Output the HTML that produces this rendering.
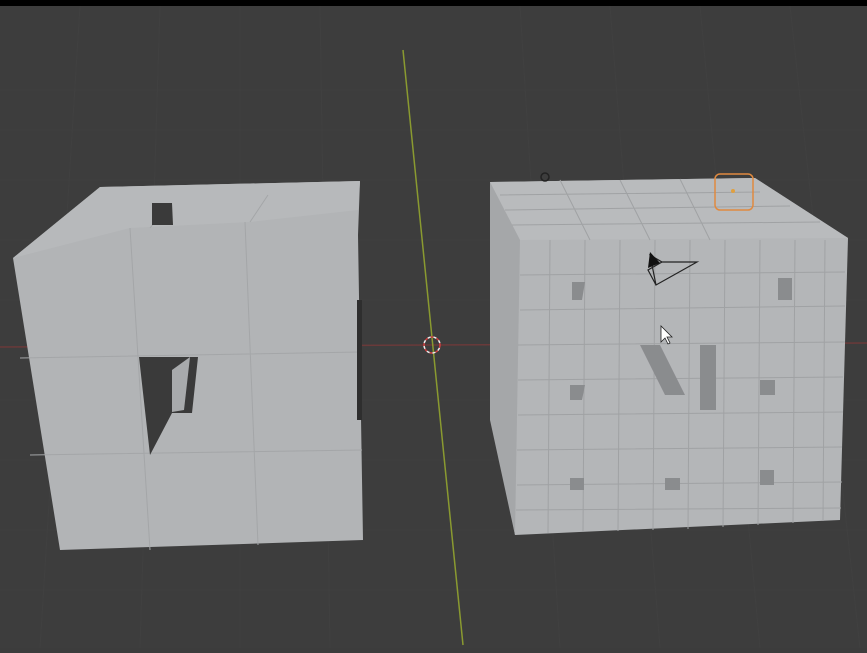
<!DOCTYPE html>
<html><head><style>html,body{margin:0;padding:0;background:#3c3c3c;overflow:hidden}</style></head>
<body>
<svg width="867" height="648" viewBox="0 0 867 648" xmlns="http://www.w3.org/2000/svg">
<rect width="867" height="648" fill="#3d3d3d"/>
<rect width="867" height="6" fill="#000"/>
<g stroke="#444" stroke-width="1" opacity="0.45">
<path d="M0 90 H867 M0 130 H867 M0 180 H867 M0 240 H867 M0 300 H867 M0 400 H867 M0 460 H867 M0 530 H867 M0 590 H867"/>
<path d="M80 6 L40 648 M160 6 L140 648 M240 6 L240 648 M320 6 L330 648 M520 6 L560 648 M610 6 L660 648 M700 6 L760 648 M790 6 L860 648"/>
</g>
<line x1="0" y1="347" x2="867" y2="343" stroke="#6a3a3a" stroke-width="1.5"/>
<line x1="403" y1="50" x2="463" y2="645" stroke="#8a9a30" stroke-width="1.5"/>
<!-- left cube -->
<polygon points="100,187 360,181 358,235 363,540 60,550 13,258" fill="#b2b4b6"/>
<polygon points="13,258 100,187 360,181 358,210 250,222 130,228" fill="#b7b9bb"/>
<g stroke="#a4a6a8" stroke-width="1" fill="none">
<path d="M130 228 L150 550 M245 222 L258 545 M20 358 L360 352 M30 455 L362 450 M150 228 L170 203 M250 222 L268 195"/>
</g>
<polygon points="152,203 172,203 173,225 152,225" fill="#3a3a3a"/>
<polygon points="139,357 198,357 192,413 172,413 150,455" fill="#3a3a3a"/>
<polygon points="172,370 190,357 184,410 172,412" fill="#a8aaac"/>
<rect x="357" y="300" width="5" height="120" fill="#2e2e2e"/>
<!-- right cube -->
<polygon points="490,182 755,178 848,238 840,520 515,535 490,400" fill="#b4b6b8"/>
<polygon points="490,182 755,178 848,238 520,240" fill="#b9bbbd"/>
<polygon points="490,182 520,240 515,535 490,420" fill="#a5a7a9"/>
<g stroke="#a0a2a4" stroke-width="1" fill="none">
<path d="M520 275 L845 272 M520 310 L845 306 M518 345 L845 342 M518 380 L843 377 M518 415 L843 412 M517 450 L842 447 M517 485 L842 482 M516 510 L841 508"/>
<path d="M550 240 L548 533 M585 240 L583 532 M620 240 L618 531 M655 240 L653 530 M690 240 L688 529 M725 240 L723 527 M760 240 L758 525 M795 240 L793 523 M825 240 L823 521"/>
<path d="M500 195 L760 192 M505 210 L790 206 M512 225 L820 222 M560 180 L590 240 M620 180 L650 240 M680 179 L710 240"/>
</g>
<g fill="#8a8c8e">
<polygon points="572,282 585,282 582,300 572,300"/><polygon points="778,278 792,278 792,300 778,300"/>
<polygon points="640,345 660,345 685,395 665,395"/><polygon points="700,345 716,345 716,410 700,410"/>
<polygon points="570,385 585,385 582,400 570,400"/><polygon points="760,380 775,380 775,395 760,395"/>
<polygon points="570,478 584,478 584,490 570,490"/><polygon points="665,478 680,478 680,490 665,490"/><polygon points="760,470 774,470 774,485 760,485"/>
</g>
<!-- icons -->
<rect x="715" y="174" width="38" height="36" rx="5" fill="none" stroke="#e08a40" stroke-width="1.5"/>
<circle cx="733" cy="191" r="2" fill="#e0a040"/>
<circle cx="545" cy="177" r="4" fill="none" stroke="#222" stroke-width="1.5"/>
<path d="M650 255 L662 262 L697 262 L656 285 Z M656 285 L648 270 L662 262" fill="none" stroke="#222" stroke-width="1.2"/>
<polygon points="650,252 660,263 648,268" fill="#111"/>
<path d="M661 326 L661 342 L665 338 L668 344 L670 343 L667 337 L672 337 Z" fill="#fff" stroke="#222" stroke-width="0.8"/>
<circle cx="432" cy="345" r="8" fill="none" stroke="#d04040" stroke-width="1.5" stroke-dasharray="3 3"/>
<circle cx="432" cy="345" r="8" fill="none" stroke="#eee" stroke-width="1.5" stroke-dasharray="3 3" stroke-dashoffset="3"/>
</svg>
</body></html>
